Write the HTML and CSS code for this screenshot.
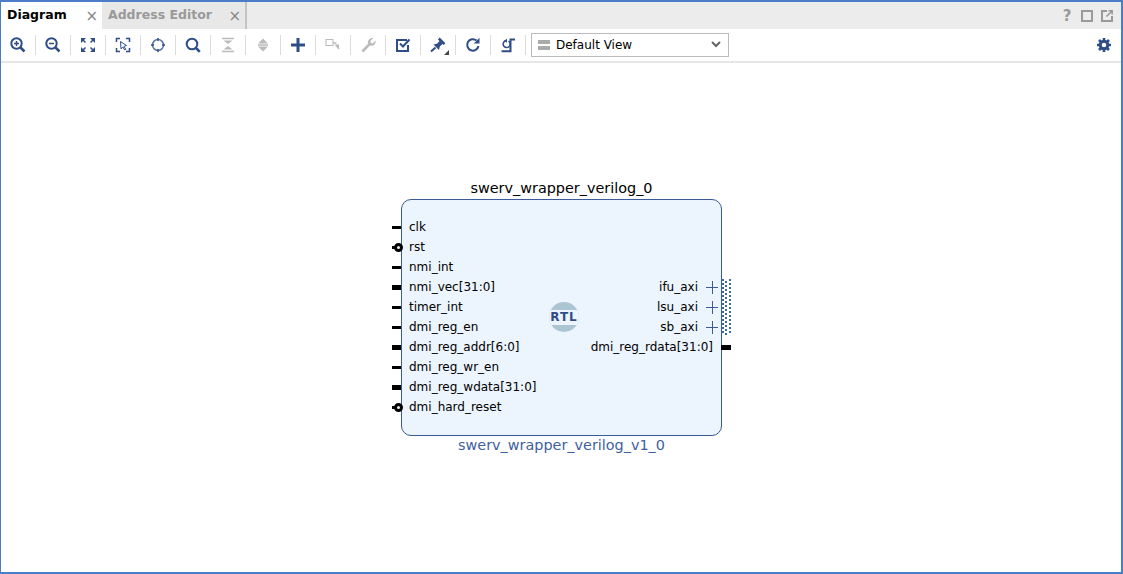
FILE: index.html
```html
<!DOCTYPE html>
<html lang="en">
<head>
    <meta charset="UTF-8">
    <title>Diagram</title>
    <link rel="stylesheet" href="styles.css">
</head>
<body>
    <div class="frame">
        <!-- tabs -->
        <div class="tabbar">
            <div class="tab active"><span class="tab-name">Diagram</span><span class="tab-close">×</span></div>
            <div class="tab"><span class="tab-name">Address Editor</span><span class="tab-close">×</span></div>
            <div class="window-icons">
                <span class="help">?</span>
                <svg width="12" height="12" viewBox="0 0 12 12"><rect x="1" y="1" width="10" height="10" fill="none" stroke="#999" stroke-width="2"/></svg>
                <svg width="12" height="12" viewBox="0 0 12 12"><path d="M6 1H1v10h10V6" fill="none" stroke="#999" stroke-width="2"/><path d="M5.500 6.500L11 1M7.500 .8H11.200V4.500" fill="none" stroke="#999" stroke-width="1.500"/></svg>
            </div>
        </div>

        <!-- toolbar -->
        <div class="toolbar">
            <div class="tool"><svg width="18" height="18" viewBox="0 0 18 18"><circle cx="7.500" cy="7.500" r="5.200" class="st"/><path d="M11.500 11.500l4 4" class="st thick"/><path d="M5 7.500h5M7.500 5v5" class="st thin"/></svg></div>
            <div class="tool"><svg width="18" height="18" viewBox="0 0 18 18"><circle cx="7.500" cy="7.500" r="5.200" class="st"/><path d="M11.500 11.500l4 4" class="st thick"/><path d="M5 7.500h5" class="st thin"/></svg></div>
            <div class="tool"><svg width="18" height="18" viewBox="0 0 18 18"><path d="M3 3l3.500 3.500M15 3l-3.500 3.500M3 15l3.500-3.500M15 15l-3.500-3.500" class="st thin"/><path d="M2 2h5L2 7zM16 2h-5l5 5zM2 16h5l-5-5zM16 16h-5l5-5z" class="fl"/></svg></div>
            <div class="tool"><svg width="18" height="18" viewBox="0 0 18 18"><path d="M6 2.500H2.500V6M12 2.500h3.500V6M2.500 12v3.500H6M15.500 12v3.500H12" class="st thin"/><path d="M6.500 5.500l6 4-2.500.8 1.800 3-1.200.7-1.700-3-1.900 1.800z" fill="#fff" stroke="#2f4d86"/></svg></div>
            <div class="tool"><svg width="18" height="18" viewBox="0 0 18 18"><circle cx="9" cy="9" r="5.500" class="st thin light"/><path d="M9 2v3M9 13v3M2 9h3M13 9h3" class="st thin"/></svg></div>
            <div class="tool"><svg width="18" height="18" viewBox="0 0 18 18"><circle cx="8" cy="8" r="5.300" class="st"/><path d="M12 12l3.800 3.800" class="st thick"/></svg></div>
            <div class="tool"><svg width="18" height="18" viewBox="0 0 18 18"><path d="M3 2.500h12M3 15.500h12" class="st off thin"/><path d="M4.500 4.500h9L9 8zM4.500 13.500h9L9 10z" class="fl off"/></svg></div>
            <div class="tool"><svg width="18" height="18" viewBox="0 0 18 18"><path d="M9 2.500l5 5H4zM9 15.500l-5-5h10z" class="fl off"/><path d="M4 9h10" class="st off thin"/></svg></div>
            <div class="tool"><svg width="18" height="18" viewBox="0 0 18 18"><path d="M9 2v14M2 9h14" class="st plus"/></svg></div>
            <div class="tool"><svg width="18" height="18" viewBox="0 0 18 18"><rect x="2" y="3.500" width="7" height="6" fill="#fff" stroke="#bbb"/><path d="M9 7h3.500M12 9l3 4" class="st off thin"/><path d="M10.500 8.500h4.500v4.500z" class="fl off"/></svg></div>
            <div class="tool"><svg width="18" height="18" viewBox="0 0 18 18"><path d="M2.500 14.500l6.500-6.800a4.400 4.400 0 0 1 5.200-5.500l-2.700 2.700.4 2 2 .4 2.700-2.700a4.400 4.400 0 0 1-5.700 5L4.500 16.500z" class="fl off"/></svg></div>
            <div class="tool"><svg width="18" height="18" viewBox="0 0 18 18"><path d="M14 9v6H3V4h10" class="st"/><path d="M6 7.500l3 3 6.500-7" class="st"/></svg></div>
            <div class="tool"><svg width="18" height="18" viewBox="0 0 18 18"><path d="M2 15.500l4.500-4" class="st"/><path d="M4.500 8.500l5.500 5.500.8-3.500 3-2.800-3-3-2.800 3z" class="fl"/><path d="M9.800 2.500l5.700 5.700" class="st thick"/></svg><i class="corner"></i></div>
            <div class="tool"><svg width="18" height="18" viewBox="0 0 18 18"><path d="M14.500 10a5.700 5.700 0 1 1-2-5.500" class="st"/><path d="M15.500 1.800v5.700H9.800z" class="fl"/></svg></div>
            <div class="tool"><svg width="18" height="18" viewBox="0 0 18 18"><path d="M6.500 4.800a3.500 3.500 0 1 0 3 .3" class="st thin"/><path d="M5 4.800l3-2v4z" class="fl"/><path d="M16 3.500h-4.500v11.700H2.500" class="st"/></svg></div>

            <div class="view-select">
                <svg width="12" height="10" viewBox="0 0 12 10"><path d="M0 0h12v4H0zM0 6h12v4H0z" fill="#aaa"/></svg>
                <span class="view-name">Default View</span>
                <svg class="chevron" width="10" height="7" viewBox="0 0 10 7"><path d="M1 1l4 4 4-4" fill="none" stroke="#666" stroke-width="2"/></svg>
            </div>

            <div class="gear">
                <svg width="16" height="16" viewBox="0 0 16 16"><circle cx="8" cy="8" r="3.800" fill="none" stroke="#2f4d86" stroke-width="3"/><path d="M8 1v14M1 8h14M3 3l10 10M13 3L3 13" stroke="#2f4d86" stroke-width="2.600"/><circle cx="8" cy="8" r="2.300" fill="#fff"/></svg>
            </div>
        </div>

        <!-- block design canvas -->
        <div class="canvas">
            <div class="ip">
                <div class="ip-title">swerv_wrapper_verilog_0</div>
                <div class="ip-box">
                    <div class="ports ports-in">
                        <div class="port">clk</div>
                        <div class="port inv">rst</div>
                        <div class="port">nmi_int</div>
                        <div class="port bus">nmi_vec[31:0]</div>
                        <div class="port">timer_int</div>
                        <div class="port">dmi_reg_en</div>
                        <div class="port bus">dmi_reg_addr[6:0]</div>
                        <div class="port">dmi_reg_wr_en</div>
                        <div class="port bus">dmi_reg_wdata[31:0]</div>
                        <div class="port inv">dmi_hard_reset</div>
                    </div>
                    <div class="rtl"><span>RTL</span></div>
                    <div class="ports ports-out">
                        <div class="port axi">ifu_axi</div>
                        <div class="port axi">lsu_axi</div>
                        <div class="port axi">sb_axi</div>
                        <div class="port bus">dmi_reg_rdata[31:0]</div>
                    </div>
                    <div class="axi-band"></div>
                </div>
                <div class="ip-name">swerv_wrapper_verilog_v1_0</div>
            </div>
        </div>
    </div>
</body>
</html>
```

FILE: styles.css
```css
body {
    margin: 0;
    font-family: "DejaVu Sans", sans-serif;
    background-color: #fff;
}

.frame {
    height: 574px;
    box-sizing: border-box;
    border: 2px solid #4a7cc7;
    border-left-width: 1px;
    display: flex;
    flex-direction: column;
}

/* tabs */
.tabbar {
    height: 27px;
    background-color: #ececec;
    display: flex;
    flex-shrink: 0;
}

.tab {
    width: 145px;
    padding-left: 6px;
    box-sizing: border-box;
    display: flex;
    align-items: center;
    justify-content: space-between;
    color: #999;
    background-color: #e8e8e8;
    font-size: 12.5px;
    font-weight: bold;
    border-right: 2px solid #c4c4c4;
}

.tab.active {
    width: 101px;
    color: #000;
    background-color: #fff;
    border-right: none;
}

.tab-name {
    position: relative;
    top: -1px;
}

.tab-close {
    font-size: 15px;
    font-weight: normal;
    color: #888;
    padding-right: 4px;
}

.window-icons {
    margin-left: auto;
    padding-right: 8px;
    display: flex;
    align-items: center;
    gap: 8px;
}

.help {
    font-size: 15px;
    font-weight: bold;
    color: #999;
    width: 12px;
    text-align: center;
}

/* toolbar */
.toolbar {
    height: 34px;
    box-sizing: border-box;
    padding-bottom: 1px;
    border-bottom: 2px solid #e6e6e6;
    display: flex;
    align-items: center;
    flex-shrink: 0;
}

.tool {
    width: 35px;
    height: 20px;
    box-sizing: border-box;
    border-right: 1px solid #dcdcdc;
    display: flex;
    align-items: center;
    justify-content: center;
    position: relative;
}

.st {
    fill: none;
    stroke: #2f4d86;
    stroke-width: 2;
}

.st.thin {
    stroke-width: 1.5;
}

.st.thick {
    stroke-width: 2.5;
}

.st.plus {
    stroke-width: 3;
}

.st.light {
    stroke: #5a75a8;
}

.st.off {
    stroke: #bbb;
}

.fl {
    fill: #2f4d86;
}

.fl.off {
    fill: #bbb;
}

.corner {
    position: absolute;
    right: 6px;
    bottom: 0;
    border-left: 5px solid transparent;
    border-bottom: 5px solid #444;
}

.view-select {
    width: 198px;
    height: 24px;
    margin-left: 5px;
    padding: 0 7px 0 6px;
    box-sizing: border-box;
    border: 1px solid #bbb;
    display: flex;
    align-items: center;
    font-size: 12px;
}

.view-name {
    margin-left: 6px;
}

.chevron {
    margin-left: auto;
}

.gear {
    margin-left: auto;
    padding-right: 9px;
    display: flex;
}

/* diagram */
.canvas {
    flex: 1;
    position: relative;
}

.ip {
    position: absolute;
    left: 400px;
    top: 115px;
    width: 321px;
    display: flex;
    flex-direction: column;
    align-items: center;
}

.ip-title {
    font-size: 14.4px;
    line-height: 21px;
    color: #000;
}

.ip-box {
    width: 100%;
    height: 237px;
    box-sizing: border-box;
    padding: 17px 8px 0 7px;
    border: 1px solid #3a5a98;
    border-radius: 10px;
    background-color: #ecf4fd;
    display: flex;
    justify-content: space-between;
    position: relative;
}

.ip-name {
    font-size: 14.4px;
    line-height: 18px;
    color: #3f5f9f;
}

.ports {
    font-size: 12px;
    color: #000;
}

.ports-out {
    padding-top: 60px;
    text-align: right;
}

.port {
    height: 20px;
    line-height: 20px;
    position: relative;
}

.port::before {
    content: "";
    position: absolute;
    top: 9px;
    height: 3px;
    width: 9px;
    background-color: #000;
}

.ports-in .port::before {
    left: -17px;
}

.ports-out .port::before {
    right: -18px;
    width: 10px;
}

.port.bus::before {
    top: 8px;
    height: 5px;
}

/* active-low pins */
.port.inv::after {
    content: "";
    position: absolute;
    left: -15px;
    top: 6px;
    width: 3px;
    height: 3px;
    border: 3px solid #000;
    border-radius: 50%;
    background-color: #ecf4fd;
}

.port.inv::before {
    width: 5px;
}

/* axi interface, the plus and the dotted connector band */
.port.axi {
    padding-right: 15px;
}

.ports-out .port.axi::before {
    right: -5px;
    top: 10px;
    width: 12px;
    height: 1px;
    background-color: #3a5a98;
}

.port.axi::after {
    content: "";
    position: absolute;
    right: 0;
    top: 4px;
    width: 1px;
    height: 13px;
    background-color: #3a5a98;
}

.axi-band {
    position: absolute;
    left: 320px;
    top: 79px;
    width: 9px;
    height: 56px;
    background-image:
        linear-gradient(to bottom, #3f6aa8 50%, transparent 50%),
        linear-gradient(to bottom, #3f6aa8 50%, transparent 50%),
        linear-gradient(to bottom, #3f6aa8 50%, transparent 50%);
    background-size: 2px 4px;
    background-position: 0 0, 3px 2px, 7px 0;
    background-repeat: repeat-y;
}

.rtl {
    position: absolute;
    left: 147px;
    top: 102px;
    width: 30px;
    height: 30px;
    border-radius: 50%;
    background-color: #abc5d3;
    display: flex;
    align-items: center;
    justify-content: center;
    overflow: hidden;
}

.rtl span {
    width: 100%;
    text-align: center;
    background-color: #ecf4fd;
    color: #2f4d86;
    font-size: 12px;
    font-weight: bold;
    letter-spacing: 1px;
    line-height: 15px;
}
```
